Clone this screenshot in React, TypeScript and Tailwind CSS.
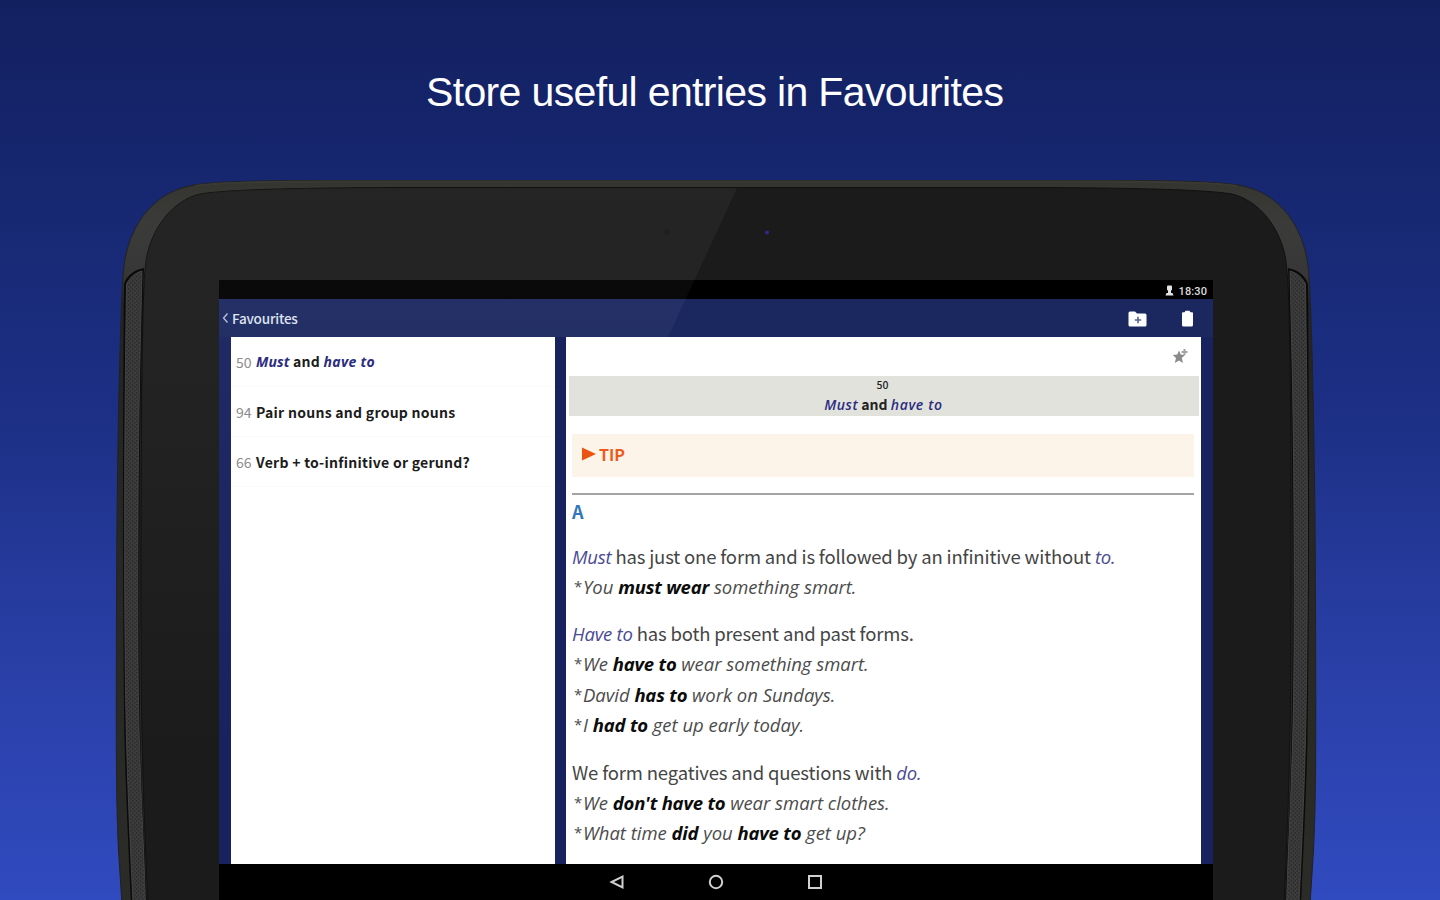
import type { ReactNode } from "react";

const sans = "font-['Noto_Sans_CJK_SC','Noto_Sans',sans-serif]";
const ital = "font-['Open_Sans','Noto_Sans',sans-serif] italic";

function DeviceSide() {
  return (
    <g>
      <path
        d="M717 180.5 H330 C270 180.5 220 181 194 185 C160 191 137 214 127 250 C124 262 123 272 122.500 285 C120 330 117 450 116.500 600 C116 740 116 800 118.500 850 L122 905 H717"
        fill="url(#rim)"
        stroke="#22221f"
        strokeWidth="1"
      />
      <path d="M717 181.500 H330 C270 181.500 222 182 195 186" fill="none" stroke="#3a3a35" strokeWidth="2" />
      <path
        d="M717 187.500 H400 C280 188 225 190 200 194 C172 201 152 228 146.500 258 C143 280 142.500 330 141.500 400 C141 500 140.500 600 141.500 700 C142.500 780 145 840 148 905 H717"
        fill="#1b1b1b"
        stroke="#111"
        strokeWidth="1"
      />
      <path
        d="M124 284 C127 275 134 270 144 268 C142 320 140 400 139.500 520 C139 640 139.500 700 141 760 C142.500 810 145 850 147 905 H131 C129 860 126 800 124.500 740 C123 640 122.500 450 124 284 Z"
        fill="#0a0a0a"
      />
      <path
        d="M126.500 284 C130 277 135 273 142 271 C141 320 138.500 400 138 520 C137.500 640 138 700 140 760 C141.500 810 144 850 145.500 905 H133 C131 860 128 800 126.500 740 C124 640 124 450 126.500 284 Z"
        fill="#3c3c3c"
      />
      <path
        d="M126.500 284 C130 277 135 273 142 271 C141 320 138.500 400 138 520 C137.500 640 138 700 140 760 C141.500 810 144 850 145.500 905 H133 C131 860 128 800 126.500 740 C124 640 124 450 126.500 284 Z"
        fill="url(#mesh)"
        stroke="#4a4a4a"
        strokeWidth="0.8"
      />
    </g>
  );
}

function Device() {
  return (
    <svg className="absolute inset-0" width="1440" height="900" viewBox="0 0 1440 900" aria-hidden="true">
      <defs>
        <linearGradient id="rim" gradientUnits="userSpaceOnUse" x1="0" y1="180" x2="0" y2="900">
          <stop offset="0" stopColor="#34342f" />
          <stop offset="0.06" stopColor="#3b3b3a" />
          <stop offset="0.13" stopColor="#373737" />
          <stop offset="0.17" stopColor="#242424" />
          <stop offset="1" stopColor="#2b2b27" />
        </linearGradient>
        <pattern id="mesh" width="4" height="4" patternUnits="userSpaceOnUse">
          <rect width="1.500" height="1.500" fill="#2a2a2a" />
          <rect x="2" y="2" width="1.500" height="1.500" fill="#2a2a2a" />
        </pattern>
      </defs>
      <DeviceSide />
      <g transform="translate(1432 0) scale(-1 1)">
        <DeviceSide />
      </g>
      <rect x="664" y="229" width="6" height="6" rx="2" fill="#171717" />
      <circle cx="767" cy="232.500" r="2" fill="#33268c" />
    </svg>
  );
}

function Gloss() {
  return (
    <svg className="pointer-events-none absolute inset-0" width="1440" height="900" viewBox="0 0 1440 900" aria-hidden="true">
      <defs>
        <linearGradient id="gloss" gradientUnits="userSpaceOnUse" x1="0" y1="188" x2="0" y2="760">
          <stop offset="0" stopColor="#fff" stopOpacity="0.042" />
          <stop offset="0.3" stopColor="#fff" stopOpacity="0.036" />
          <stop offset="1" stopColor="#fff" stopOpacity="0" />
        </linearGradient>
      </defs>
      <path d="M737 188 H400 C280 188 225 190 200 194 C172 201 152 228 146.500 258 C143 280 142 400 141 700 L143 760 H231 V337 H668 Z" fill="url(#gloss)" />
    </svg>
  );
}

function StatusBar() {
  return (
    <div className="flex h-[19px] items-center justify-end bg-black pr-[6px] text-white">
      <svg width="9" height="11" viewBox="0 0 9 11" fill="#e4e4e4" className="mt-[2px] mr-[5px]">
        <rect x="2" y="0.500" width="5" height="5" rx="1" />
        <rect x="3" y="5" width="3" height="3" />
        <path d="M0.500 10.500 L1.500 8 H7.500 L8.500 10.500 Z" />
      </svg>
      <span className="mt-[4px] font-[Roboto,sans-serif] text-[11px] leading-none font-medium tracking-[0.1px] text-[#dcdcdc]">18:30</span>
    </div>
  );
}

function AppBar() {
  return (
    <div className={`flex h-[38px] items-center bg-[#1b2860] pl-[3px] ${sans}`}>
      <svg width="7" height="12" viewBox="0 0 7 12" fill="none" stroke="#b9bfda" strokeWidth="1.300">
        <path d="M5.500 1.500 L1.500 6 L5.500 10.500" />
      </svg>
      <span className="ml-[3px] text-[13.500px] leading-[20px] font-medium tracking-[-0.18px] text-[#dfe2f0]">Favourites</span>
      <svg className="mt-[2px] ml-auto" width="19" height="16" viewBox="0 0 19 16" fill="#fff">
        <path d="M2 0.500 H7 L9 2.500 H17 Q18.500 2.500 18.500 4 V14 Q18.500 15.500 17 15.500 H2 Q0.500 15.500 0.500 14 V2 Q0.500 0.500 2 0.500 Z" />
        <path d="M10 5.800 V12.200 M6.800 9 H13.200" stroke="#5c648e" strokeWidth="1.600" />
      </svg>
      <svg className="mt-px mr-[19px] ml-[34px]" width="13" height="17" viewBox="0 0 13 17" fill="#fff">
        <path d="M1 2.500 H3.500 L4.500 0.800 H8.500 L9.500 2.500 H12 V4 H1 Z" />
        <rect x="1" y="2.500" width="11" height="14" rx="1.500" />
      </svg>
    </div>
  );
}

function Entry({ num, children }: { num: string; children: ReactNode }) {
  return (
    <li className="flex h-[50px] items-center border-b border-[#fafafa] pl-[5px] text-[14px] leading-none font-bold tracking-[0.27px] whitespace-pre text-[#1c1c1c]">
      <span className="w-[20px] font-normal tracking-normal text-[#8c8c8c]">{num}</span>
      <span className="whitespace-pre">{children}</span>
    </li>
  );
}

function FavouritesList() {
  return (
    <ul className={`w-[324px] bg-white ${sans}`}>
      <Entry num="50">
        <span className={`${ital} tracking-[0.1px] text-[#2c2c80]`}>Must</span> and{" "}
        <span className={`${ital} tracking-[0.3px] text-[#2c2c80]`}>have to</span>
      </Entry>
      <Entry num="94">Pair nouns and group nouns</Entry>
      <Entry num="66">Verb + to-infinitive or gerund?</Entry>
    </ul>
  );
}

function Term({ children }: { children: ReactNode }) {
  return <span className={`${ital} text-[18.500px] tracking-[-0.2px] text-[#4a4a94]`}>{children}</span>;
}

function Strong({ children }: { children: ReactNode }) {
  return <b className="font-bold tracking-[-0.2px] text-[#0c0c0c]">{children}</b>;
}

function Line({ children }: { children: ReactNode }) {
  return <p className="h-[30.800px] text-[18.500px] tracking-[-0.17px] whitespace-pre">{children}</p>;
}

function Example({ children }: { children: ReactNode }) {
  return (
    <p className={`h-[30.800px] pl-[2px] text-[18.500px] tracking-[-0.02px] whitespace-pre text-[#4c4c4c] ${ital}`}>
      <span className="relative -top-[2px] inline-block w-[9px] text-[15px] leading-none not-italic">*</span>
      {children}
    </p>
  );
}

function Article() {
  return (
    <article className={`w-[635px] overflow-hidden bg-white ${sans}`}>
      <div className="flex h-[39px] items-center justify-end pr-[12px]">
        <svg width="17" height="17" viewBox="0 0 17 17" fill="#8a8a8a">
          <path d="M7 2.500 L8.700 6.500 L13 7 L9.800 10 L11 15 L7 12.400 L2.800 15 L4 10 L0.800 7 L5.300 6.500 Z" />
          <path d="M12.500 1 V7 M9.500 4 H15.500" fill="none" stroke="#a4a4a4" strokeWidth="2" />
        </svg>
      </div>
      <header className="mr-[2px] ml-[3px] flex h-[40px] flex-col items-center bg-[#e2e2dd] pt-[2px] pr-[3px] text-[#222]">
        <span className="text-[10.500px] leading-[13px] font-medium">50</span>
        <h2 className="pl-[2px] text-[14px] leading-[26px] font-bold whitespace-pre">
          <span className={`${ital} font-semibold tracking-[0.5px] text-[#2c2c80]`}>Must</span> and{" "}
          <span className={`${ital} font-semibold tracking-[0.65px] text-[#2c2c80]`}>have to</span>
        </h2>
      </header>
      <div className="mt-[18px] mr-[7px] ml-[6px] flex h-[43px] items-center bg-[#fcf4e8] pb-[3px] pl-[10px] text-[#ee5a1c]">
        <svg width="14" height="14" viewBox="0 0 14 14" fill="#ea5410">
          <path d="M0 0.500 L14 7 L0 13.500 Z" />
        </svg>
        <span className="ml-[3px] text-[16px] leading-none font-bold">TIP</span>
      </div>
      <hr className="mt-[16px] mr-[7px] ml-[6px] border-t-2 border-[#a4a4a4]" />
      <h3 className="mx-[6px] h-[46px] text-[18px] leading-[32px] font-bold text-[#3377bb]">A</h3>
      <div className="mx-[6px] flex flex-col gap-[15.500px] leading-[30.800px] text-[#454545]">
        <section>
          <Line><Term>Must</Term> has just one form and is followed by an infinitive without <Term>to.</Term></Line>
          <Example>You <Strong>must wear</Strong> something smart.</Example>
        </section>
        <section>
          <Line><Term>Have to</Term> has both present and past forms.</Line>
          <Example>We <Strong>have to</Strong> wear something smart.</Example>
          <Example>David <Strong>has to</Strong> work on Sundays.</Example>
          <Example>I <Strong>had to</Strong> get up early today.</Example>
        </section>
        <section>
          <Line>We form negatives and questions with <Term>do.</Term></Line>
          <Example>We <Strong>don't have to</Strong> wear smart clothes.</Example>
          <Example>What time <Strong>did</Strong> you <Strong>have to</Strong> get up?</Example>
        </section>
      </div>
    </article>
  );
}

function NavBar() {
  return (
    <nav className="flex h-[36px] items-center justify-center gap-[83px] bg-black pr-[1px]">
      <svg width="16" height="16" viewBox="0 0 16 16" fill="none" stroke="#d0d0d0" strokeWidth="2">
        <path d="M13.500 2.500 V13.500 L2.500 8 Z" />
      </svg>
      <svg width="16" height="16" viewBox="0 0 16 16" fill="none" stroke="#d0d0d0" strokeWidth="2">
        <circle cx="8" cy="8" r="6.200" />
      </svg>
      <svg width="16" height="16" viewBox="0 0 16 16" fill="none" stroke="#d0d0d0" strokeWidth="2">
        <rect x="2" y="2" width="12" height="12" />
      </svg>
    </nav>
  );
}

export default function App() {
  return (
    <div className="relative h-[900px] w-[1440px] overflow-hidden bg-[linear-gradient(180deg,#132060_0%,#16266e_18%,#1c2f84_45%,#2a40a8_75%,#304abf_100%)]">
      <Device />
      <div className="relative flex flex-col">
        <h1 className="h-[280px] pt-[68px] pl-[426px] font-['Liberation_Sans',Arial,sans-serif] text-[41px] leading-[48px] tracking-[-0.65px] whitespace-nowrap text-white">
          Store useful entries in Favourites
        </h1>
        <main className="ml-[219px] flex h-[620px] w-[994px] flex-col bg-[#1b2860]">
          <StatusBar />
          <AppBar />
          <div className="flex h-[527px] gap-[11px] bg-[#17225f] pl-[12px]">
            <FavouritesList />
            <Article />
          </div>
          <NavBar />
        </main>
      </div>
      <Gloss />
    </div>
  );
}
